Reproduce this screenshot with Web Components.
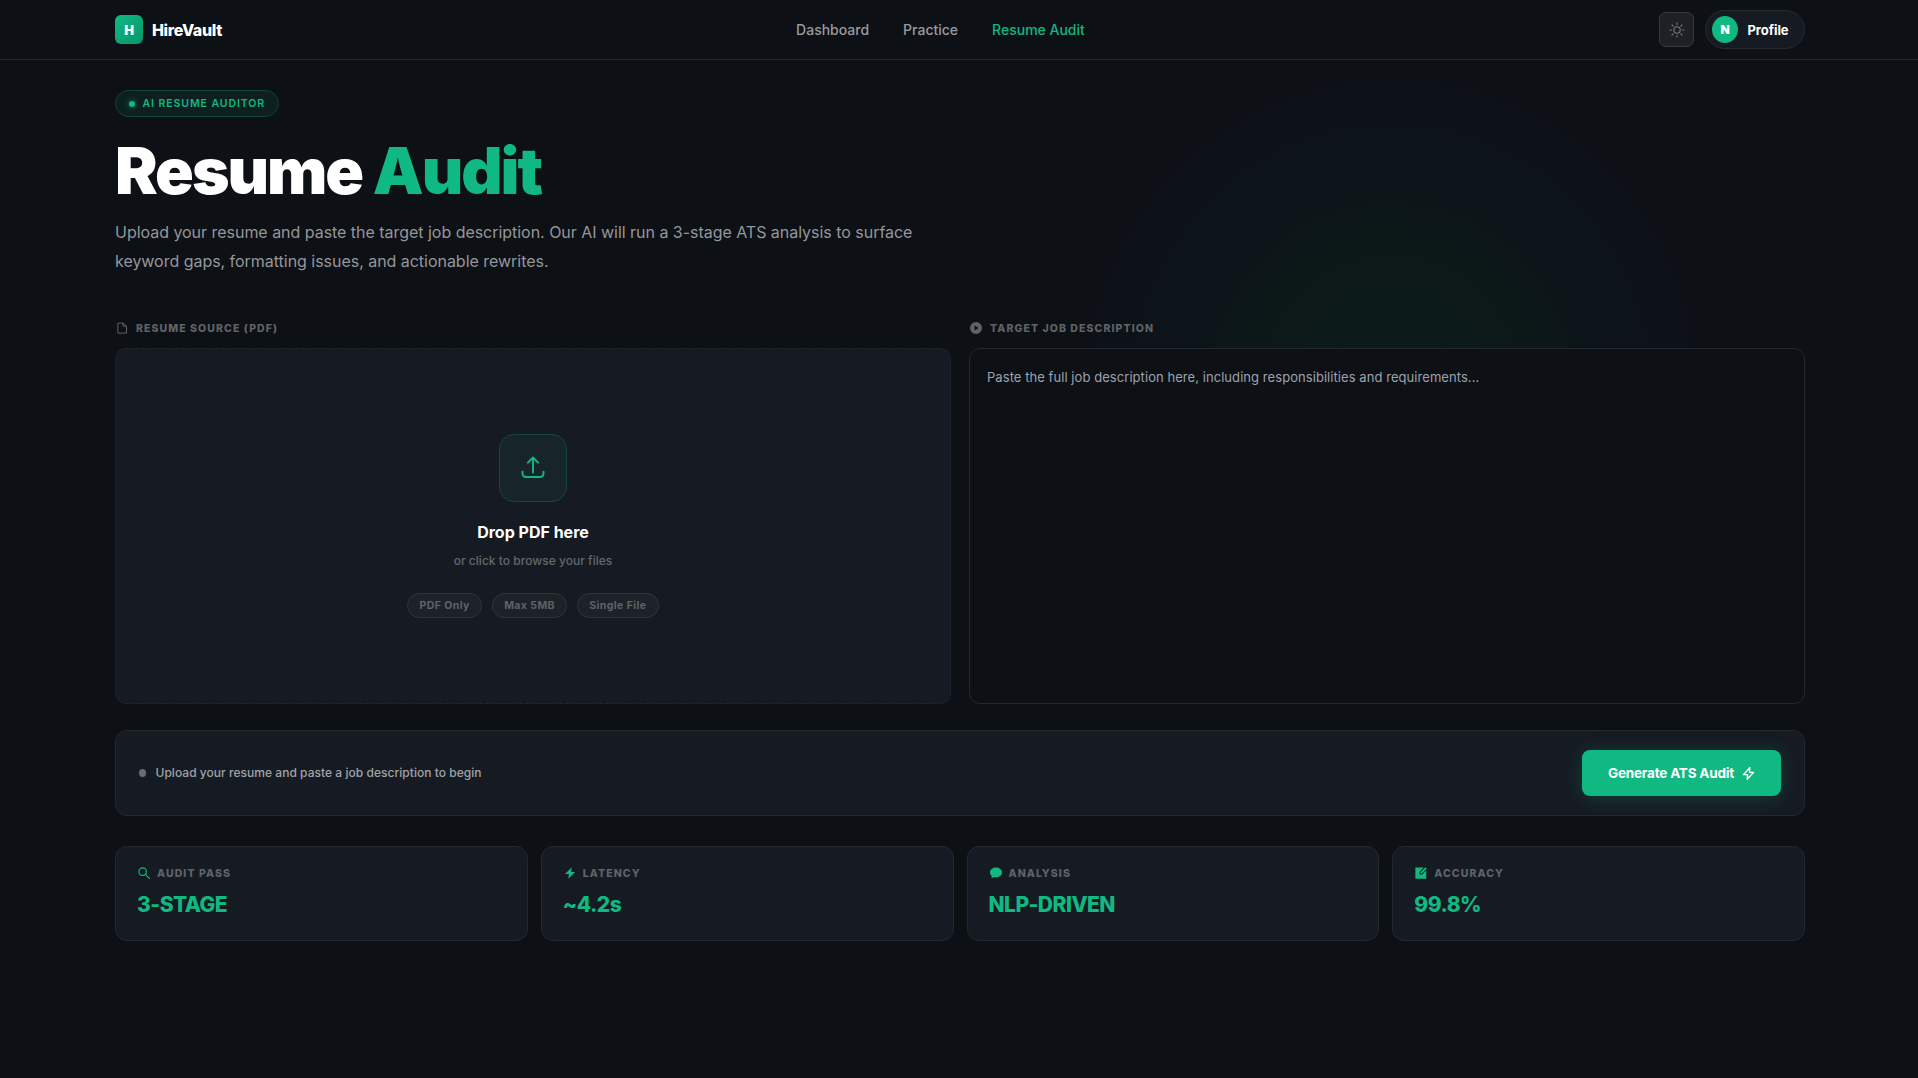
<!DOCTYPE html>
<html lang="en">

<head>
  <meta charset="UTF-8">
  <meta name="viewport" content="width=device-width, initial-scale=1.0">
  <title>HireVault - Resume Audit</title>
  <style>
    :root {
      --bg: #0d1015;
      --card: #161b23;
      --line: #24292f;
      --green: #10b981;
      --text: #ffffff;
      --muted: #8f9296;
      --dim: #5f6368;
    }

    body {
      margin: 0;
      height: 1078px;
      overflow: hidden;
      background: var(--bg);
      color: var(--text);
      font-family: Inter, "Liberation Sans", sans-serif;
    }
  </style>
</head>

<body>
  <hv-app></hv-app>

  <script>
    // Small helper: attach a shadow root and fill it
    function render(el, html) {
      el.attachShadow({ mode: 'open' }).innerHTML = html;
    }

    const ICONS = {
      sun: '<circle cx="8" cy="8" r="3.2"/><path d="M8 .9v1.6M8 13.5v1.6M.9 8h1.6M13.5 8h1.6M3 3l1.1 1.1M11.9 11.9L13 13M13 3l-1.1 1.1M4.1 11.9L3 13"/>',
      file: '<path d="M3 1.5h6.2L14 5.5v9.3H3zM9.2 1.5v4H14"/>',
      play: '<path fill="currentColor" stroke="none" fill-rule="evenodd" d="M8 0a8 8 0 1 0 0 16A8 8 0 0 0 8 0zM6 4.6v6.8L11.6 8z"/>',
      upload: '<path d="M8 11V1.2M4.6 4.4L8 1l3.4 3.4M1 10.4v1.3A2.3 2.3 0 0 0 3.3 14h9.4a2.3 2.3 0 0 0 2.3-2.3v-1.3"/>',
      bolt: '<path d="M9.6 1L1.8 9.4h5L6.4 15l7.8-8.4h-5z"/>',
      boltFill: '<path fill="currentColor" stroke="none" d="M10.2.5L1.2 9.4h5.4L5.8 15.5l9-8.9H9.400z"/>',
      search: '<circle cx="6.2" cy="6.2" r="5"/><path d="M9.8 9.8l5.4 5.4"/>',
      chat: '<path fill="currentColor" stroke="none" d="M8 .8C3.6.8 0 3.6 0 7.2c0 2 1 3.7 2.4 4.900l-.4 2.900 3.400-1.600c.8.200 1.700.300 2.600.300 4.400 0 8-2.900 8-6.500S12.400.8 8 .8z"/>',
      edit: '<path fill="currentColor" stroke="none" d="M.5.5h11L6 6.5V10h3.600l5.400-5.600V15.500H.5zM14 .2L15.800 2 9.100 8.800H7.300V7z"/>'
    };

    // Line or solid icon, sized by its "size" attribute
    class HvIcon extends HTMLElement {
      constructor() {
        super();
        const size = this.getAttribute('size') || 12;
        const weight = this.getAttribute('weight') || 1.3;
        render(this, `
          <style>
            :host { display: inline-flex; flex: none; }
            svg { display: block; fill: none; stroke: currentColor; stroke-linecap: round; stroke-linejoin: round; }
          </style>
          <svg width="${size}" height="${size}" viewBox="0 0 16 16" stroke-width="${weight}">${ICONS[this.getAttribute('name')]}</svg>
        `);
      }
    }

    class HvNav extends HTMLElement {
      constructor() {
        super();
        render(this, `
          <style>
            :host {
              box-sizing: border-box;
              height: 60px;
              padding: 0 113px 0 115px;
              border-bottom: 1px solid #22262b;
              display: flex;
              justify-content: space-between;
              align-items: center;
            }
            .brand { display: flex; align-items: center; gap: 9px; font-size: 16px; font-weight: 800; line-height: 18px; letter-spacing: -0.36px; }
            .mark {
              width: 28px; height: 29px; border-radius: 6px;
              display: grid; place-items: center;
              background: linear-gradient(135deg, #10b981, #059669);
              font-size: 13px; font-weight: 900; letter-spacing: 0;
            }
            nav { display: flex; gap: 34px; font-size: 14px; font-weight: 500; color: #989b9e; }
            .on { color: var(--green); }
            .right { display: flex; align-items: center; gap: 11px; }
            .theme {
              box-sizing: border-box; width: 35px; height: 35px; border: 1px solid #36393e; border-radius: 7px;
              display: grid; place-items: center; background: #1d2025; color: #777a7e;
            }
            .profile {
              box-sizing: border-box; width: 100px; height: 39px; padding-left: 6px;
              border: 1px solid #262b31; border-radius: 20px; background: var(--card);
              display: flex; align-items: center; gap: 9.5px; font-size: 13px; font-weight: 700; line-height: 16px; letter-spacing: -0.06px;
            }
            .avatar { width: 26px; height: 27px; border-radius: 50%; background: var(--green); display: grid; place-items: center; font-size: 12px; font-weight: 900; }
          </style>
          <div class="brand"><span class="mark">H</span><span>HireVault</span></div>
          <nav><span>Dashboard</span><span>Practice</span><span class="on">Resume Audit</span></nav>
          <div class="right">
            <span class="theme"><hv-icon name="sun" size="16" weight="1.1"></hv-icon></span>
            <span class="profile"><span class="avatar">N</span><span>Profile</span></span>
          </div>
        `);
      }
    }

    class HvHero extends HTMLElement {
      constructor() {
        super();
        render(this, `
          <style>
            :host { display: block; }
            .badge {
              box-sizing: border-box; width: 164px; height: 27px; padding-left: 13px;
              border: 1px solid #114535; border-radius: 14px; background: #0e1f20; color: var(--green);
              display: flex; align-items: center; gap: 7.5px;
              font-size: 10.5px; font-weight: 600; letter-spacing: 0.93px; white-space: nowrap;
            }
            .dot { width: 6px; height: 6px; border-radius: 50%; background: var(--green); box-shadow: 0 0 6px rgba(16, 185, 129, 0.7); }
            h1 { margin: 20px 0 0; font-size: 64px; line-height: 68px; font-weight: 900; letter-spacing: -2.03px; white-space: nowrap; }
            h1 span { color: var(--green); }
            p { margin: 13px 0 0; width: 830px; font-size: 16px; line-height: 29px; letter-spacing: -0.03px; color: #94979b; }
          </style>
          <div class="badge"><span class="dot"></span><span>AI RESUME AUDITOR</span></div>
          <h1>Resume <span>Audit</span></h1>
          <p>Upload your resume and paste the target job description. Our AI will run a 3-stage ATS analysis to surface keyword gaps, formatting issues, and actionable rewrites.</p>
        `);
      }
    }

    // Labelled column; the panel itself comes in through the slot
    class HvField extends HTMLElement {
      constructor() {
        super();
        render(this, `
          <style>
            :host { display: flex; flex-direction: column; gap: 13px; }
            .label { height: 14px; padding-left: 0.5px; display: flex; align-items: center; gap: 8.5px; color: var(--dim); font-size: 10.5px; font-weight: 800; letter-spacing: 1.08px; }
          </style>
          <div class="label"><hv-icon name="${this.getAttribute('icon')}" size="12"></hv-icon><span>${this.getAttribute('label')}</span></div>
          <slot></slot>
        `);
      }
    }

    class HvDrop extends HTMLElement {
      constructor() {
        super();
        render(this, `
          <style>
            :host {
              box-sizing: border-box; height: 356px; padding-top: 85px;
              border: 1px dashed #20262d; border-radius: 11px; background: var(--card);
              display: flex; flex-direction: column; align-items: center;
            }
            .tile {
              box-sizing: border-box; width: 68px; height: 68px; border: 1px solid #12483b; border-radius: 15px;
              display: grid; place-items: center; background: #172429; color: var(--green);
            }
            b { margin-top: 19px; font-size: 16px; line-height: 22px; font-weight: 700; }
            small { margin-top: 9px; font-size: 12px; line-height: 18px; font-weight: 500; letter-spacing: 0.02px; color: #64686d; }
            .tags { display: flex; gap: 9.5px; margin-top: 23px; }
            .tags span {
              box-sizing: border-box; height: 25px; padding: 0 11.4px; border: 1px solid #30353b; border-radius: 13px;
              background: #1d2228; color: #5f6368; font-size: 10.5px; line-height: 23px; font-weight: 700; letter-spacing: 0.42px;
            }
          </style>
          <div class="tile"><hv-icon name="upload" size="24" weight="1.3"></hv-icon></div>
          <b>Drop PDF here</b>
          <small>or click to browse your files</small>
          <div class="tags"><span>PDF Only</span><span>Max 5MB</span><span>Single File</span></div>
        `);
      }
    }

    class HvDescription extends HTMLElement {
      constructor() {
        super();
        render(this, `
          <style>
            :host {
              box-sizing: border-box; height: 356px; padding: 16px 17px;
              border: 1px solid #24292f; border-radius: 11px; background: var(--bg);
              display: block; color: #9ca3af; font-size: 13px; line-height: 24px; letter-spacing: 0.06px;
            }
          </style>
          <slot></slot>
        `);
      }
    }

    class HvAction extends HTMLElement {
      constructor() {
        super();
        render(this, `
          <style>
            :host {
              box-sizing: border-box; height: 86px; padding: 0 23px;
              border: 1px solid var(--line); border-radius: 12px; background: var(--card);
              display: flex; align-items: center; justify-content: space-between;
            }
            .status { display: flex; align-items: center; gap: 9.5px; color: #a0a3a6; font-size: 12px; font-weight: 500; line-height: 14px; letter-spacing: 0.035px; }
            .status span:last-child { padding-bottom: 1px; }
            .dot { width: 7px; height: 8px; border-radius: 50%; background: #686c74; }
            .button {
              width: 199px; height: 46px; border-radius: 8px; background: var(--green);
              box-shadow: 0 2px 18px rgba(16, 185, 129, 0.22);
              display: flex; align-items: center; justify-content: center; gap: 8px;
              font-size: 13.5px; font-weight: 700; line-height: 16px; letter-spacing: -0.18px;
            }
            .button span { padding-bottom: 1px; }
          </style>
          <div class="status"><span class="dot"></span><span>Upload your resume and paste a job description to begin</span></div>
          <div class="button"><span>Generate ATS Audit</span><hv-icon name="bolt" size="13" weight="1.7"></hv-icon></div>
        `);
      }
    }

    class HvStat extends HTMLElement {
      constructor() {
        super();
        render(this, `
          <style>
            :host {
              box-sizing: border-box; height: 95px; padding: 19px 21px;
              border: 1px solid var(--line); border-radius: 12px; background: var(--card); display: block;
            }
            .label { height: 14px; padding-left: 1px; display: flex; align-items: center; gap: 7px; color: var(--dim); font-size: 10.5px; font-weight: 800; letter-spacing: 1.08px; }
            hv-icon { color: var(--green); }
            .value { margin-top: 12px; color: var(--green); font-size: 21px; line-height: 26px; font-weight: 800; letter-spacing: -0.5px; }
          </style>
          <div class="label"><hv-icon name="${this.getAttribute('icon')}" size="12" weight="1.6"></hv-icon><span>${this.getAttribute('label')}</span></div>
          <div class="value"><slot></slot></div>
        `);
      }
    }

    class HvApp extends HTMLElement {
      constructor() {
        super();
        render(this, `
          <style>
            :host { display: block; height: 1078px; }
            main { padding: 30px 113px 0 115px; background: radial-gradient(circle 314px at 1392px 322px, #0b1c1a 0, #0c1918 38%, #0c151a 65%, #0d1118 94%, transparent 100%) no-repeat; }
            .fields { margin-top: 45px; display: grid; grid-template-columns: 1fr 1fr; gap: 18px; }
            hv-action { margin-top: 26px; }
            .stats { margin-top: 30px; display: grid; grid-template-columns: repeat(4, 1fr); gap: 13px; }
          </style>
          <hv-nav></hv-nav>
          <main>
            <hv-hero></hv-hero>
            <div class="fields">
              <hv-field icon="file" label="RESUME SOURCE (PDF)"><hv-drop></hv-drop></hv-field>
              <hv-field icon="play" label="TARGET JOB DESCRIPTION"><hv-description>Paste the full job description here, including responsibilities and requirements...</hv-description></hv-field>
            </div>
            <hv-action></hv-action>
            <div class="stats">
              <hv-stat icon="search" label="AUDIT PASS">3-STAGE</hv-stat>
              <hv-stat icon="boltFill" label="LATENCY">~4.2s</hv-stat>
              <hv-stat icon="chat" label="ANALYSIS">NLP-DRIVEN</hv-stat>
              <hv-stat icon="edit" label="ACCURACY">99.8%</hv-stat>
            </div>
          </main>
        `);
      }
    }

    customElements.define('hv-icon', HvIcon);
    customElements.define('hv-nav', HvNav);
    customElements.define('hv-hero', HvHero);
    customElements.define('hv-field', HvField);
    customElements.define('hv-drop', HvDrop);
    customElements.define('hv-description', HvDescription);
    customElements.define('hv-action', HvAction);
    customElements.define('hv-stat', HvStat);
    customElements.define('hv-app', HvApp);
  </script>
</body>

</html>
